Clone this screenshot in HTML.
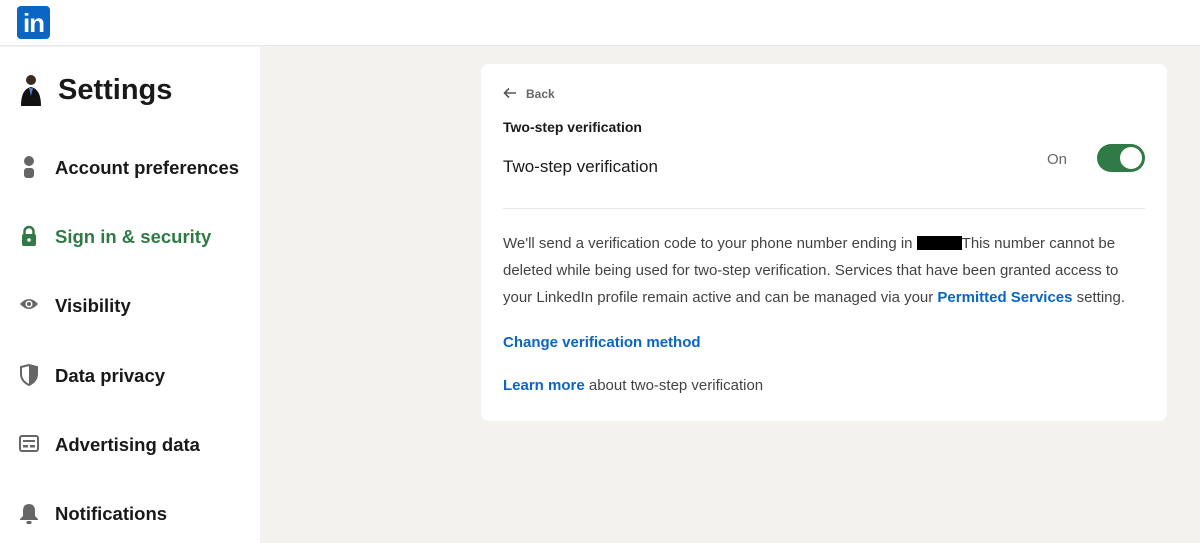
<!DOCTYPE html>
<html><head><style>
*{margin:0;padding:0;box-sizing:border-box}
body{width:1200px;height:543px;overflow:hidden;background:#f4f2ee;font-family:"Liberation Sans",Arial,sans-serif;position:relative;color:#000000e6}
.hdr{position:absolute;left:0;top:0;width:1200px;height:46px;background:#fff;border-bottom:1px solid #e8e8e8}
.logo{position:absolute;left:17px;top:6px;width:33px;height:33px;background:#0a66c2;border-radius:4px;color:#fff;font-weight:bold;font-size:26px;line-height:34px;text-align:center;letter-spacing:-1px}
.side{position:absolute;left:0;top:47px;width:260px;height:496px;background:#fff}
.title{position:absolute;left:58px;top:74px;font-size:29px;font-weight:bold;color:#191919}
.nav{position:absolute;left:55px;font-size:18.5px;font-weight:bold;color:#191919}
.ic{position:absolute;left:19px}
.card{position:absolute;left:481px;top:64px;width:686px;height:357px;background:#fff;border-radius:8px}
.t{position:absolute;white-space:nowrap}
a{color:#0a66c2;font-weight:bold;text-decoration:none}
</style></head><body>
<div class="hdr"><div class="logo">in</div></div>
<div class="side">
<svg class="ic" style="left:20px;top:25px" width="22" height="36" viewBox="0 0 22 36"><circle cx="11" cy="8" r="5" fill="#3a2a20"/><path d="M1 34 Q1 17 11 15 Q21 17 21 34Z" fill="#111"/><path d="M9 16 L11 24 L13 16Z" fill="#4a7bd0"/></svg>
</div>
<div class="title">Settings</div>
<svg class="ic" style="top:156px" width="20" height="22" viewBox="0 0 20 22"><circle cx="10" cy="5" r="5" fill="#666"/><rect x="5" y="12" width="10" height="10" rx="3" fill="#666"/></svg>
<div class="nav" style="top:157px">Account preferences</div>
<svg class="ic" style="top:225px" width="20" height="22" viewBox="0 0 20 22"><path d="M5.5 10V6.5a4.5 4.5 0 0 1 9 0V10" stroke="#2f7a45" stroke-width="2.5" fill="none"/><rect x="3" y="9" width="14" height="12" rx="2" fill="#2f7a45"/><circle cx="10" cy="15" r="1.8" fill="#fff"/></svg>
<div class="nav" style="top:226px;color:#2f7a45">Sign in &amp; security</div>
<svg class="ic" style="top:296px" width="20" height="16" viewBox="0 0 20 16"><path d="M1 8Q10 -2 19 8Q10 18 1 8Z" fill="#666"/><circle cx="10" cy="8" r="3.5" fill="#fff"/><circle cx="10" cy="8" r="2" fill="#666"/></svg>
<div class="nav" style="top:295px">Visibility</div>
<svg class="ic" style="top:364px" width="20" height="22" viewBox="0 0 20 22"><path d="M2 3L10 1L18 3V10Q18 17 10 21Q2 17 2 10Z" fill="none" stroke="#666" stroke-width="2"/><path d="M10 1L18 3V10Q18 17 10 21Z" fill="#666"/></svg>
<div class="nav" style="top:365px">Data privacy</div>
<svg class="ic" style="top:435px" width="20" height="18" viewBox="0 0 20 18"><rect x="1" y="1" width="18" height="15" rx="2" fill="none" stroke="#666" stroke-width="2"/><rect x="4" y="5" width="12" height="2" fill="#666"/><rect x="4" y="10" width="5" height="2.5" fill="#666"/><rect x="11" y="10" width="5" height="2.5" fill="#666"/></svg>
<div class="nav" style="top:434px">Advertising data</div>
<svg class="ic" style="top:503px" width="20" height="22" viewBox="0 0 20 22"><path d="M10 1Q4 1 4 8V13L1 16V17H19V16L16 13V8Q16 1 10 1Z" fill="#666"/><rect x="7.5" y="18" width="5" height="3" rx="1" fill="#666"/></svg>
<div class="nav" style="top:503px">Notifications</div>

<div class="card">
<svg class="t" style="left:22px;top:23px" width="14" height="12" viewBox="0 0 14 12"><path d="M13 6H2M6 1.5L1.5 6L6 10.5" stroke="#555" stroke-width="1.6" fill="none"/></svg>
<div class="t" style="left:45px;top:23px;font-size:12px;font-weight:bold;color:#666">Back</div>
<div class="t" style="left:22px;top:55px;font-size:14px;font-weight:bold;color:#191919">Two-step verification</div>
<div class="t" style="left:22px;top:93px;font-size:17px;color:#191919">Two-step verification</div>
<div class="t" style="left:566px;top:87px;font-size:15px;color:#666">On</div>
<div class="t" style="left:616px;top:80px;width:48px;height:28px;border-radius:14px;background:#2f7a45"><div style="position:absolute;right:3px;top:3px;width:22px;height:22px;border-radius:50%;background:#fff"></div></div>
<div class="t" style="left:22px;top:144px;width:642px;height:1px;background:#e8e8e8"></div>
<div class="t" style="left:22px;top:166px;font-size:15px;line-height:27px;color:#000000bf;white-space:normal;width:660px">We'll send a verification code to your phone number ending in <span style="display:inline-block;width:45px;height:14px;background:#000;vertical-align:-2px"></span>This number cannot be<br>deleted while being used for two-step verification. Services that have been granted access to<br>your LinkedIn profile remain active and can be managed via your <a>Permitted Services</a> setting.</div>
<div class="t" style="left:22px;top:270px;font-size:15px"><a>Change verification method</a></div>
<div class="t" style="left:22px;top:313px;font-size:15px;color:#000000bf"><a>Learn more</a> about two-step verification</div>
</div>
</body></html>
